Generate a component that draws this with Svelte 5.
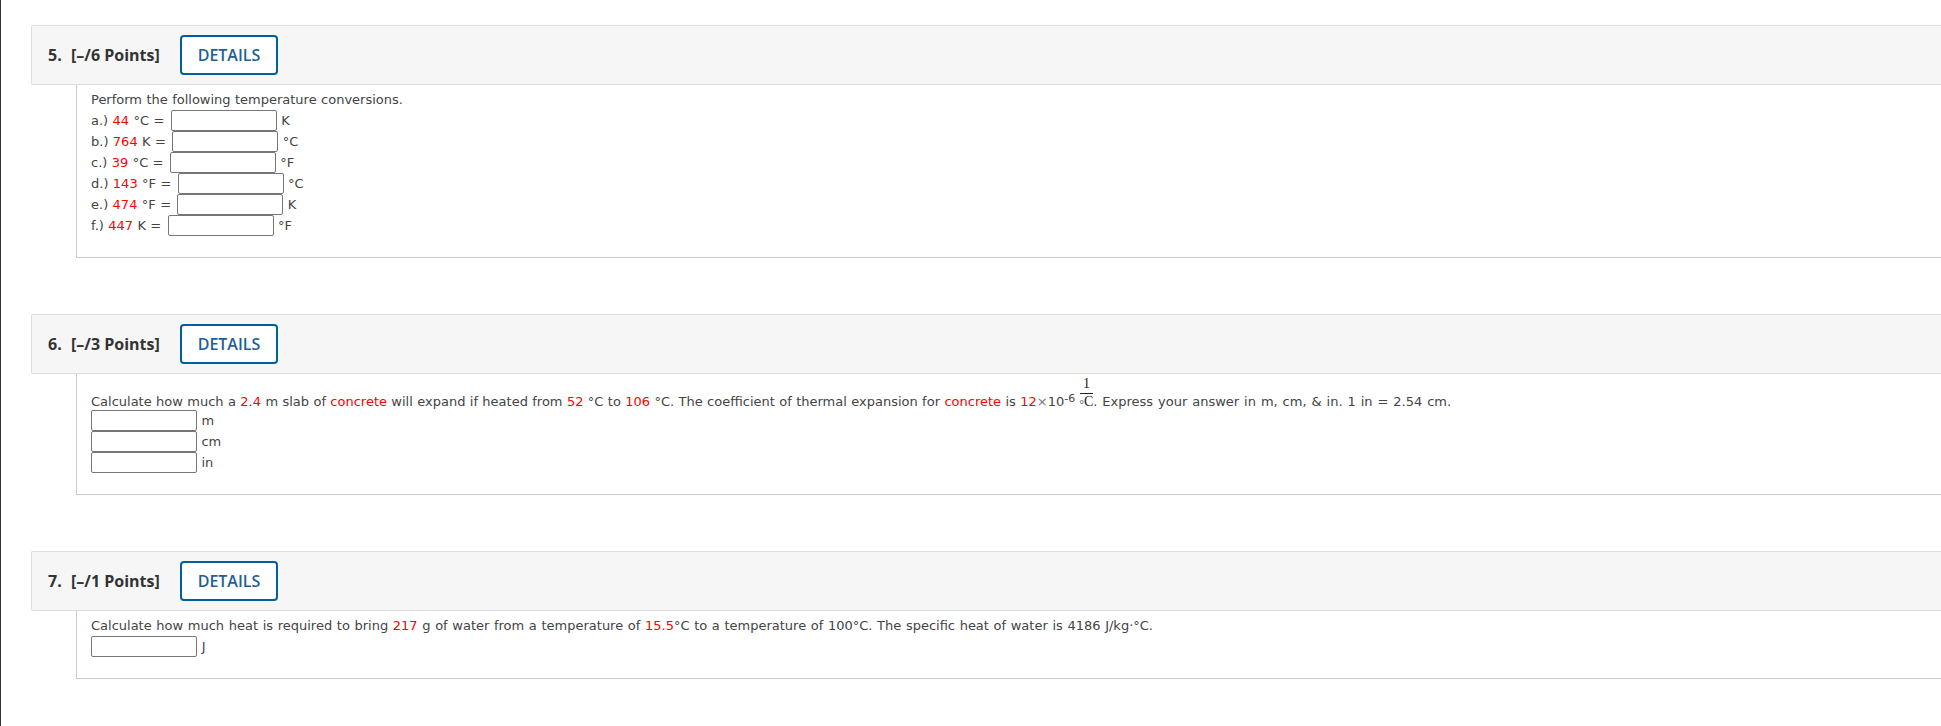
<script>
	const conversions = [
		{ label: 'a.)', value: '44', from: '°C =', to: 'K' },
		{ label: 'b.)', value: '764', from: 'K =', to: '°C' },
		{ label: 'c.)', value: '39', from: '°C =', to: '°F' },
		{ label: 'd.)', value: '143', from: '°F =', to: '°C' },
		{ label: 'e.)', value: '474', from: '°F =', to: 'K' },
		{ label: 'f.)', value: '447', from: 'K =', to: '°F' }
	];
	const lengths = ['m', 'cm', 'in'];
</script>

<div class="page">
	<section class="question q5">
		<header>
			<b class="num">5.</b>
			<b class="points">[–/6 Points]</b>
			<button>DETAILS</button>
		</header>
		<div class="body">
			<div class="row">Perform the following temperature conversions.</div>
			{#each conversions as c}
				<div class="row">
					{c.label} <span class="red">{c.value}</span> {c.from} <input type="text" /> <span class="unit">{c.to}</span>
				</div>
			{/each}
		</div>
	</section>

	<section class="question q6">
		<header>
			<b class="num">6.</b>
			<b class="points">[–/3 Points]</b>
			<button>DETAILS</button>
		</header>
		<div class="body">
			<div class="row tall">
				Calculate how much a <span class="red">2.4</span> m slab of <span class="red">concrete</span> will expand if heated from <span class="red">52</span> °C to <span class="red">106</span> °C. The coefficient of thermal expansion for <span class="red">concrete</span> is <span class="red">12</span><span class="times">×</span>10<sup>-6</sup>
				<span class="frac"><span class="top">1</span><span class="bottom"><span class="deg">°</span>C</span></span><span class="tail">. Express your answer in m, cm, &amp; in. 1 in = 2.54 cm.</span>
			</div>
			{#each lengths as unit}
				<div class="row"><input type="text" /> <span class="unit">{unit}</span></div>
			{/each}
		</div>
	</section>

	<section class="question q7">
		<header>
			<b class="num">7.</b>
			<b class="points">[–/1 Points]</b>
			<button>DETAILS</button>
		</header>
		<div class="body">
			<div class="row">
				Calculate how much heat is required to bring <span class="red">217</span> g of water from a temperature of <span class="red">15.5</span>°C to a temperature of 100°C. The specific heat of water is 4186 J/kg·°C.
			</div>
			<div class="row"><input type="text" /> <span class="unit">J</span></div>
		</div>
	</section>
</div>

<style>
	:global(body) {
		margin: 0;
		background: #fff;
	}

	.page {
		box-sizing: border-box;
		height: 726px;
		overflow: hidden;
		border-left: 1px solid #333;
		padding: 25px 0 0 30px;
		font-family: "DejaVu Sans", sans-serif;
		font-size: 13px;
		word-spacing: 0.25px;
		color: #444;
	}

	.question {
		margin-bottom: 56px;
	}

	header {
		box-sizing: border-box;
		display: flex;
		align-items: center;
		height: 60px;
		padding: 0 0 0 16px;
		background: #f6f6f6;
		border: 1px solid #ddd;
		border-right: 0;
		border-radius: 2px 0 0 2px;
		font-family: "Open Sans", sans-serif;
		font-size: 16px;
		word-spacing: 0;
		color: #333;
	}

	.num {
		width: 23px;
	}

	.points {
		width: 109px;
	}

	button {
		box-sizing: border-box;
		width: 98px;
		height: 40px;
		padding: 0;
		background: #fff;
		border: 2px solid #005f9e;
		border-radius: 4px;
		font-family: "Open Sans", sans-serif;
		font-size: 16px;
		font-weight: 600;
		color: #1f5f96;
	}

	.body {
		margin-left: 45px;
		padding: 4px 0 21px 14px;
		border-left: 1px solid #ccc;
		border-bottom: 1px solid #ccc;
	}

	.q6 .body {
		padding-top: 0;
	}

	.q7 .row {
		word-spacing: 0.5px;
	}

	.row {
		height: 21px;
		line-height: 21px;
		white-space: nowrap;
	}

	.tall {
		height: 36px;
	}

	input {
		box-sizing: border-box;
		width: 106px;
		height: 21px;
		margin: 0;
		padding: 0;
		background: #fff;
		border: 1px solid #767676;
		border-radius: 2px;
		vertical-align: top;
	}

	.q5 input {
		margin-left: 2px;
	}

	.red {
		color: #f00;
	}

	.times {
		color: #777;
	}

	.tail {
		word-spacing: 0.8px;
	}

	sup {
		font-size: 11px;
		line-height: 0;
		vertical-align: 4px;
	}

	.frac {
		display: inline-block;
		font-family: "Liberation Serif", serif;
		font-size: 14px;
		text-align: center;
		color: #222;
	}

	.top {
		display: block;
		height: 19px;
		line-height: 19px;
		border-bottom: 1px solid #222;
	}

	.bottom {
		display: block;
		height: 15px;
		line-height: 15px;
	}

	.deg {
		font-size: 11px;
		line-height: 0;
		vertical-align: -2px;
	}
</style>
